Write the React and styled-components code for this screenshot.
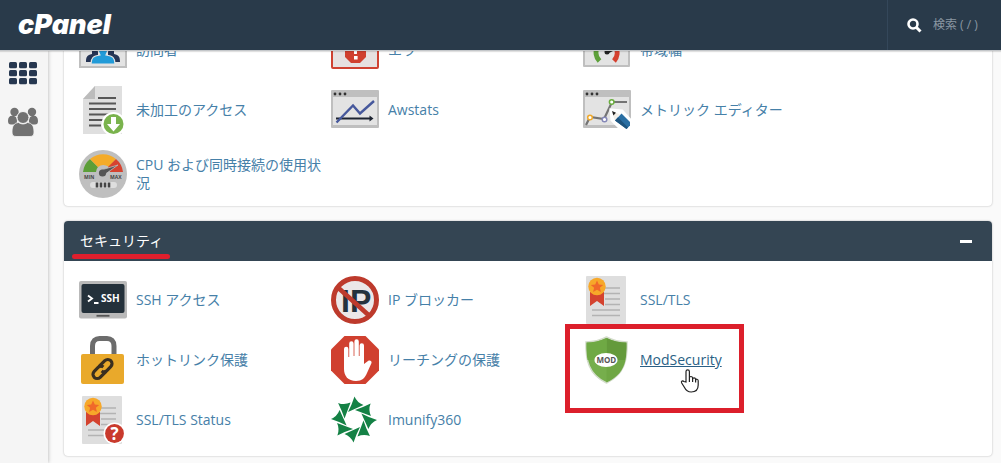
import React, { useLayoutEffect, useRef } from 'react';
import styled, { createGlobalStyle, css } from 'styled-components';

const GlobalStyle = createGlobalStyle`
    * {
        box-sizing: border-box;
    }
    body {
        margin: 0;
        background: #fafafa;
        font-family: "Open Sans", "Noto Sans CJK JP", sans-serif;
        font-size: 14px;
        line-height: 18px;
    }
`;

const Page = styled.div`
    height: 100vh;
    display: flex;
    flex-direction: column;
`;

const Header = styled.header`
    flex: none;
    height: 50px;
    display: flex;
    justify-content: space-between;
    background: #293a4a;
    box-shadow: 0 1px 0 #c4c7ca, 0 2px 1px rgba(0, 0, 0, 0.12);
    z-index: 2;
`;

const Logo = styled.a`
    display: flex;
    align-items: center;
    padding-left: 18px;
    color: #fff;
    font-family: Inter, sans-serif;
    font-size: 27px;
    font-weight: 900;
    font-style: italic;
    text-decoration: none;
`;

const Search = styled.label`
    width: 114px;
    display: flex;
    align-items: center;
    gap: 11px;
    padding-left: 19px;
    border-left: 1px solid #34475a;
`;

const SearchInput = styled.input`
    width: 64px;
    padding: 0;
    border: 0;
    outline: 0;
    background: transparent;
    color: #fff;
    font: inherit;
    font-size: 12px;
    &::placeholder {
        color: #8b97a2;
        opacity: 1;
    }
`;

const Body = styled.div`
    flex: 1;
    min-height: 0;
    display: flex;
`;

const Sidebar = styled.nav`
    flex: none;
    width: 48px;
    display: flex;
    flex-direction: column;
    align-items: center;
    gap: 22px;
    padding: 12px 2px 0 0;
    background: #f5f5f5;
    box-shadow: 0 0 4px rgba(0, 0, 0, 0.3);
    a {
        display: block;
    }
    svg {
        display: block;
    }
`;

const Main = styled.main`
    flex: 1;
    min-width: 0;
    padding: 16px 9px 0 16px;
    overflow-y: auto;
    scrollbar-width: none;
`;

const Panel = styled.section`
    margin-bottom: 15px;
    background: #fff;
    border-radius: 4px;
    box-shadow: 0 0 2px rgba(0, 0, 0, 0.3);
`;

const PanelHeader = styled.div`
    height: 40px;
    display: flex;
    align-items: center;
    justify-content: space-between;
    padding: 0 20px 0 16px;
    border-radius: 4px 4px 0 0;
    background: #344553;
`;

const PanelTitle = styled.h2`
    position: relative;
    margin: 0;
    color: #fff;
    font-size: 14px;
    font-weight: 400;
`;

const Collapse = styled.button`
    width: 12px;
    height: 12px;
    display: flex;
    align-items: center;
    padding: 0;
    border: 0;
    background: transparent;
    &::before {
        content: "";
        width: 12px;
        height: 3px;
        background: #fff;
    }
`;

const Grid = styled.div`
    display: grid;
    grid-template-columns: repeat(auto-fill, 252px);
    row-gap: 12px;
    padding: ${({ $tight }) => ($tight ? '15px 15px 8px' : '15px 15px 12px')};
`;

const Item = styled.div`
    position: relative;
    display: flex;
    align-items: center;
    gap: 9px;
    ${({ $tall }) => $tall && css`
        padding-top: 4px;
    `}
    > svg:first-child {
        flex: none;
    }
`;

const ItemLink = styled.a`
    color: ${({ $hover }) => ($hover ? '#2a5f85' : '#4680a8')};
    text-decoration: ${({ $hover }) => ($hover ? 'underline' : 'none')};
    word-break: break-all;
`;

// hand drawn marks over the page
const Underline = styled.span`
    position: absolute;
    left: -8px;
    right: -7px;
    top: 22px;
    height: 5px;
    border-radius: 3px;
    background: #e01f2d;
`;

const Frame = styled.span`
    position: absolute;
    left: -18px;
    top: -12px;
    width: 179px;
    height: 89px;
    border: 5px solid #dc1f2b;
    pointer-events: none;
`;

const Pointer = styled.svg`
    position: absolute;
    left: 97px;
    top: 32px;
    pointer-events: none;
`;

const Icon = ({ children }) => (
    <svg width="48" height="48" viewBox="0 0 48 48" aria-hidden="true">{children}</svg>
);

const WindowShape = () => (
    <>
        <rect y="4" width="48" height="38" rx="1" fill="#bfbfbf" />
        <rect x="2" y="11" width="44" height="28" fill="#e3e3e3" />
        <g fill="#333">
            <circle cx="4" cy="8" r="1.4" />
            <circle cx="9" cy="8" r="1.4" />
            <circle cx="14" cy="8" r="1.4" />
        </g>
    </>
);

const VisitorsIcon = () => (
    <Icon>
        <rect y="4" width="48" height="38" fill="#bfbfbf" />
        <rect x="2" y="6" width="44" height="34" fill="#e3e3e3" />
        <g fill="#253454">
            <circle cx="13" cy="20" r="5" />
            <circle cx="35" cy="20" r="5" />
            <path d="M7 36c0-5 1-7 6-8v-4h6v12zM41 36c0-5-1-7-6-8v-4h-6v12z" />
        </g>
        <path d="M12 38c0-6 2-8 9-9l-3-7c-1-6 1-9 6-9s7 3 6 9l-3 7c7 1 9 3 9 9z" fill="#229bd8" stroke="#e3e3e3" strokeWidth="1.2" />
    </Icon>
);

const ErrorsIcon = () => (
    <Icon>
        <rect x="1" y="5" width="46" height="37" rx="1" fill="#e6e1e1" stroke="#cf4232" strokeWidth="2" />
        <path d="M20 15h9l6 6v10l-6 6h-9l-6-6V21z" fill="#d0402f" />
        <path d="M22.500 16h4l-.6 12h-2.800zM23 30h3.600v3.500H23z" fill="#fff" />
    </Icon>
);

const BandwidthIcon = () => (
    <Icon>
        <rect y="4" width="47" height="37" rx="1" fill="#bfbfbf" />
        <rect x="2" y="6" width="43" height="33" fill="#e3e3e3" />
        <g fill="none" strokeWidth="5">
            <path d="M16.500 35a12 12 0 0 1-2-14" stroke="#5da03a" />
            <path d="M14.500 21a12 12 0 0 1 18 0" stroke="#f2ac29" />
            <path d="M32.500 21a12 12 0 0 1-1.500 14" stroke="#d5402f" />
        </g>
        <path d="M22 25l14-3-12 6z" fill="#222" />
        <circle cx="24" cy="26" r="2.500" fill="#222" />
    </Icon>
);

const RawAccessIcon = () => (
    <Icon>
        <path d="M4 13L16 0h27v48H4z" fill="#dfdfdf" />
        <path d="M4 13L16 0v13z" fill="#bcbcbc" />
        <path d="M19 12h18M10 17.500h27M10 23h27M10 28.500h20M10 34h14M10 39.500h12" stroke="#575757" strokeWidth="2" />
        <circle cx="34.500" cy="38" r="12" fill="#fff" />
        <circle cx="34.500" cy="38" r="10" fill="#7ab34d" />
        <path d="M32 31h5v7h4l-6.500 7.500L28 38h4z" fill="#fff" />
    </Icon>
);

const AwstatsIcon = () => (
    <Icon>
        <WindowShape />
        <path d="M5 32.500h35" stroke="#1c2330" strokeWidth="1.800" />
        <path d="M38.500 29.500l4 3-4 3z" fill="#1c2330" />
        <path d="M5.500 36.500l16.500-17 7 8 14-12.500" fill="none" stroke="#46589c" strokeWidth="2.400" />
    </Icon>
);

const MetricsIcon = () => (
    <Icon>
        <WindowShape />
        <path d="M3 39l4-8 14 2 8-17h15" fill="none" stroke="#747474" strokeWidth="2.200" />
        <circle cx="7" cy="31.500" r="2.300" fill="#fff" stroke="#f0a92a" strokeWidth="1.500" />
        <circle cx="21.500" cy="33.500" r="2.300" fill="#fff" stroke="#8588b8" strokeWidth="1.500" />
        <circle cx="28.700" cy="16" r="2.300" fill="#fff" stroke="#6aae3e" strokeWidth="1.500" />
        <path d="M28 24l11 1 9 10v7H37l-8-8z" fill="#fff" stroke="#fff" strokeWidth="3" />
        <path d="M29 25l8 3.500-5.500 5.500z" fill="#f3efe8" />
        <path d="M29 25l4 1.700-2.600 2.700z" fill="#222" />
        <path d="M38.500 27.500L47 36v3.500l-3.500 3.500L32 34.500z" fill="#2a6fa3" />
        <path d="M32 34.500l3-3.300 10 10.300-1.500 1.500z" fill="#1e547e" />
    </Icon>
);

const CpuIcon = () => (
    <Icon>
        <circle cx="24" cy="24" r="24" fill="#bfbfbf" />
        <path d="M4 22a20 20 0 0 1 7-13l8 8a8 8 0 0 0-2 5z" fill="#5c9e38" />
        <path d="M11 9a20 20 0 0 1 26 0l-7 8q-6-4-11 0z" fill="#f4ab29" />
        <path d="M37 9a20 20 0 0 1 7 13H31q0-3-2-5z" fill="#d64330" />
        <path d="M22 20l17-5-14 10z" fill="#555" stroke="#bfbfbf" strokeWidth=".8" />
        <circle cx="23.500" cy="23" r="3.600" fill="#555" />
        <g fill="#444" fontSize="5" fontWeight="700" fontFamily="Open Sans, sans-serif">
            <text x="5" y="29">MIN</text>
            <text x="31" y="29">MAX</text>
        </g>
        <rect x="11" y="32" width="27" height="6" rx="3" fill="#dedede" />
        <path d="M18 32.500v5M22 32.500v5M26 32.500v5M30 32.500v5" stroke="#444" strokeWidth="2.600" />
    </Icon>
);

const SshIcon = () => (
    <Icon>
        <rect y="5" width="48" height="37.500" rx="2" fill="#b9b9b9" />
        <rect x="2.500" y="8" width="43" height="29" rx="2" fill="#24313b" />
        <path d="M17.500 39.800h13" stroke="#555" strokeWidth="1.800" />
        <path d="M9 19.500l4 3-4 3M15 27h4.500" fill="none" stroke="#fff" strokeWidth="1.900" />
        <text x="22" y="26" fill="#fff" fontSize="10" fontWeight="700" fontFamily="Open Sans, sans-serif">SSH</text>
    </Icon>
);

const IpIcon = () => (
    <Icon>
        <circle cx="24" cy="24" r="21" fill="#ebe7e8" />
        <text x="10" y="36" fill="#25323d" fontSize="32" fontWeight="700" fontFamily="Liberation Sans, sans-serif">IP</text>
        <circle cx="24" cy="24" r="21.500" fill="none" stroke="#bd3a2c" strokeWidth="5" />
        <path d="M7.500 12L38 39.500" stroke="#bd3a2c" strokeWidth="4.600" />
    </Icon>
);

const Certificate = () => (
    <>
        <rect x="3" width="40" height="48" rx="1" fill="#dedede" />
        <path d="M20 12h17M20 17.500h17M22 23h15M22 28.500h15M9 34h28M9 39.500h28" stroke="#b3b3b3" strokeWidth="1.700" />
        <path d="M7 16h14v14l-7-5-7 5z" fill="#d4432f" />
        <circle cx="14" cy="10.500" r="8.700" fill="#f7a829" />
        <path d="M14 4.500l1.800 4 4.400.4-3.300 2.900 1 4.300-3.900-2.300-3.900 2.300 1-4.300-3.300-2.900 4.400-.4z" fill="#f0692a" />
    </>
);

const TlsIcon = () => (
    <Icon>
        <Certificate />
    </Icon>
);

const TlsStatusIcon = () => (
    <Icon>
        <Certificate />
        <circle cx="35.500" cy="37.500" r="11" fill="#fff" />
        <circle cx="35.500" cy="37.500" r="9.400" fill="#c93a2d" />
        <text x="35.500" y="43.500" textAnchor="middle" fill="#fff" fontSize="17" fontWeight="700" fontFamily="Open Sans, sans-serif">?</text>
    </Icon>
);

const HotlinkIcon = () => (
    <Icon>
        <path d="M13.500 19v-9c0-5 3-7.500 7-7.500h7.500c4 0 7 2.500 7 7.500v9" fill="none" stroke="#6c6c6c" strokeWidth="5" />
        <rect x="2" y="18" width="43" height="30" rx="2" fill="#e9a92b" />
        <g transform="translate(23.500 33) rotate(-45)" fill="none" stroke="#3a2f20" strokeWidth="3.200">
            <path d="M1 4.200h-8.500a4.200 4.200 0 0 1 0-8.400H-2a4 4 0 0 1 4 3.500" />
            <path d="M-1-4.200h8.500a4.200 4.200 0 0 1 0 8.400H2a4 4 0 0 1-4-3.500" />
        </g>
    </Icon>
);

const LeechIcon = () => (
    <Icon>
        <path d="M13.500 0h21L48 13.500v21L34.500 48h-21L0 34.500v-21z" fill="#d0402f" />
        <path d="M13 13a2.200 2.200 0 0 1 4.400 0v8h.8V7.500a2.200 2.200 0 0 1 4.400 0V20h.8V5.500a2.200 2.200 0 0 1 4.400 0V20h.8V9.500a2.200 2.200 0 0 1 4.400 0V28l4-3c2-1 4 0 3.500 2L36 37c-2 5-5 8-11 8-8 0-12-5-12-12z" fill="#fff" />
    </Icon>
);

const ModIcon = () => (
    <Icon>
        <path
            d="M23.500 1C17 4.500 10 6 3 6 2.500 24 5.500 38.500 23.500 47 41.500 38.500 44.500 24 44 6 37 6 30 4.500 23.500 1z"
            fill="#76ae4c"
            stroke="#d3dccb"
            strokeWidth="1.500"
        />
        <path d="M23.500 2C30 5 37 6.500 43.500 6.500 43.700 12 43.500 18 42.500 24H23.500z" fill="#649a3b" />
        <path d="M23.500 2C17 5 10 6.500 3.500 6.500 3.300 12 3.500 18 4.500 24H23.500z" fill="#6fa944" />
        <path d="M23.500 24h19c-2 10-8 17.500-19 22.500z" fill="#6fa744" />
        <ellipse cx="23" cy="24" rx="11.500" ry="7" fill="#fff" />
        <text x="23.300" y="27" textAnchor="middle" fill="#555" fontSize="8" fontWeight="700" fontFamily="Open Sans, sans-serif">MOD</text>
    </Icon>
);

const blades = [0, 45, 90, 135, 180, 225, 270, 315];

const ImunifyIcon = () => (
    <Icon>
        <g fill="#148145" transform="translate(23 23.500)">
            {blades.map((angle) => (
                <path key={angle} transform={`rotate(${angle})`} d="M.5-23Q3-17 9.500-14.400L-6-7.400Q-2.500-14 .5-23z" />
            ))}
        </g>
    </Icon>
);

const metrics = [
    { name: '訪問者', icon: VisitorsIcon },
    { name: 'エラー', icon: ErrorsIcon },
    { name: '帯域幅', icon: BandwidthIcon },
    { name: '未加工のアクセス', icon: RawAccessIcon },
    { name: 'Awstats', icon: AwstatsIcon },
    { name: 'メトリック エディター', icon: MetricsIcon },
    { name: 'CPU および同時接続の使用状況', icon: CpuIcon, tall: true },
];

const security = [
    { name: 'SSH アクセス', icon: SshIcon },
    { name: 'IP ブロッカー', icon: IpIcon },
    { name: 'SSL/TLS', icon: TlsIcon },
    { name: 'ホットリンク保護', icon: HotlinkIcon },
    { name: 'リーチングの保護', icon: LeechIcon },
    { name: 'ModSecurity', icon: ModIcon, marked: true },
    { name: 'SSL/TLS Status', icon: TlsStatusIcon },
    { name: 'Imunify360', icon: ImunifyIcon },
];

const Group = ({ title, items, underlined, tight }) => (
    <Panel>
        <PanelHeader>
            <PanelTitle>
                {title}
                {underlined && <Underline />}
            </PanelTitle>
            <Collapse type="button" aria-label={`${title} を折りたたむ`} />
        </PanelHeader>
        <Grid $tight={tight}>
            {items.map(({ name, icon: Picture, tall, marked }) => (
                <Item key={name} $tall={tall}>
                    <Picture />
                    <ItemLink href="#" $hover={marked}>{name}</ItemLink>
                    {marked && (
                        <>
                            <Frame />
                            <Pointer width="20" height="26" viewBox="0 0 20 26" aria-hidden="true">
                                <path
                                    d="M6 14V3.500a1.700 1.700 0 0 1 3.400 0V10c0-2 3-2 3.200 0v1c.2-1.600 2.800-1.600 3 .2v1c.3-1.500 2.600-1.200 2.600.5V17c0 4-2 7-7 7-4 0-5.500-2-7-5l-2.500-4c-1-1.700 1-2.800 2.200-1.500z"
                                    fill="#fff"
                                    stroke="#222"
                                    strokeWidth="1.200"
                                />
                                <path d="M9.400 10v4M12.600 11v3M15.600 12v2.500" stroke="#222" strokeWidth="1.200" />
                            </Pointer>
                        </>
                    )}
                </Item>
            ))}
        </Grid>
    </Panel>
);

const App = () => {
    const main = useRef(null);

    useLayoutEffect(() => {
        main.current.scrollTop = 95;
    }, []);

    return (
        <>
            <GlobalStyle />
            <Page>
                <Header>
                    <Logo href="#">cPanel</Logo>
                    <Search>
                        <svg width="15" height="15" viewBox="0 0 15 15" aria-hidden="true">
                            <circle cx="6" cy="6" r="4.500" fill="none" stroke="#fff" strokeWidth="2.600" />
                            <path d="M9 9l4.500 4.500" stroke="#fff" strokeWidth="3" />
                        </svg>
                        <SearchInput type="text" aria-label="検索" placeholder="検索 ( / )" />
                    </Search>
                </Header>
                <Body>
                    <Sidebar>
                        <a href="#" aria-label="ホーム">
                            <svg width="28" height="23" viewBox="0 0 28 23" fill="#263750">
                                {[0, 8, 16].map((y) => [0, 10, 20].map((x) => (
                                    <rect key={`${x}-${y}`} x={x} y={y} width="8" height="6.300" rx="1.500" />
                                )))}
                            </svg>
                        </a>
                        <a href="#" aria-label="ユーザー">
                            <svg width="30" height="30" viewBox="0 0 30 30" fill="#727272">
                                <circle cx="6.500" cy="5" r="4.200" />
                                <circle cx="24" cy="5" r="4.200" />
                                <path d="M0 14c0-4 2-6 6-5 3 1 3 3 3 7l-2 1.500H3q-3 0-3-3.500zM30 14c0-4-2-6-6-5-3 1-3 3-3 7l2 1.500h4q3 0 3-3.500z" />
                                <circle cx="15" cy="10.500" r="6" stroke="#f5f5f5" strokeWidth="1" />
                                <path d="M4 25c0-6 2-9 6.500-9.500 3 2 6 2 9 0C24 16 26 19 26 25c0 3-1 4.500-4 4.500H8c-3 0-4-1.500-4-4.500z" stroke="#f5f5f5" strokeWidth=".8" />
                            </svg>
                        </a>
                    </Sidebar>
                    <Main ref={main}>
                        <Group title="メトリック" items={metrics} tight />
                        <Group title="セキュリティ" items={security} underlined />
                    </Main>
                </Body>
            </Page>
        </>
    );
};

export default App;
